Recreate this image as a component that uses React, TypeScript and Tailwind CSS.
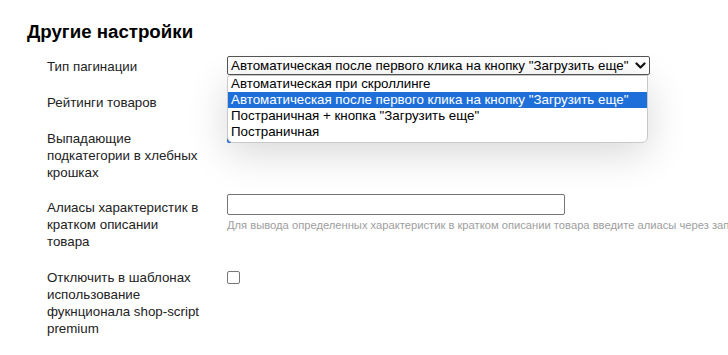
import React from "react";

const font = { fontFamily: '"Liberation Sans", Arial, sans-serif' };

function Chevron() {
  return (
    <svg width="11" height="8" viewBox="0 0 11 8" className="shrink-0">
      <path d="M1.5 1.5 L5.5 5.5 L9.5 1.5" fill="none" stroke="#111" strokeWidth="2.2" strokeLinecap="round" strokeLinejoin="round" />
    </svg>
  );
}

const options = [
  "Автоматическая при скроллинге",
  'Автоматическая после первого клика на кнопку "Загрузить еще"',
  'Постраничная + кнопка "Загрузить еще"',
  "Постраничная",
];

export default function App() {
  return (
    <div className="w-[728px] h-[355px] overflow-hidden bg-white text-[#222] relative" style={font}>
      <h2 className="ml-[27px] mt-[20px] text-[18.7px] leading-[24px] font-bold text-black">Другие настройки</h2>
      <div className="ml-[47px] mt-[14px] flex flex-col text-[13.33px] leading-[17px]">
        {/* Row 1 */}
        <div className="flex">
          <div className="w-[180px] shrink-0">Тип пагинации</div>
          <div className="relative mt-[-2px]">
            <div className="w-[423px] h-[19px] border border-[#555] rounded-[2px] flex items-center justify-between pl-[3px] pr-[3px] bg-white">
              <span className="whitespace-nowrap text-black">Автоматическая после первого клика на кнопку "Загрузить еще"</span>
              <Chevron />
            </div>
            <div className="absolute left-0 top-[81px] w-[4px] h-[6px] bg-[#1e6fd9] rounded-bl-[2px]" />
            <div className="absolute left-0 top-[19px] z-10 w-[421px] h-[68px] bg-white border border-[#c8c8c8] rounded-b-[6px] rounded-tl-[3px] shadow-[0_10px_40px_rgba(0,0,0,0.16)] overflow-hidden">
              {options.map((o, i) => (
                <div
                  key={o}
                  className={
                    i === 1
                      ? "h-[16px] leading-[16px] pl-[3px] bg-[#1e6fd9] text-white whitespace-nowrap"
                      : "h-[16px] leading-[16px] pl-[3px] text-black whitespace-nowrap"
                  }
                >
                  {o}
                </div>
              ))}
            </div>
          </div>
        </div>
        {/* Row 2 */}
        <div className="flex mt-[19px]">
          <div className="w-[180px] shrink-0">Рейтинги товаров</div>
        </div>
        {/* Row 3 */}
        <div className="flex mt-[19px]">
          <div className="w-[154px] shrink-0">Выпадающие подкатегории в хлебных крошках</div>
        </div>
        {/* Row 4 */}
        <div className="flex mt-[18px]">
          <div className="w-[154px] shrink-0">Алиасы характеристик в кратком описании товара</div>
          <div className="ml-[26px] mt-[-5px] flex flex-col">
            <div className="w-[338px] h-[21px] border border-[#767676] rounded-[2px] bg-white" />
            <div className="mt-[4px] text-[11.2px] leading-[13px] text-[#9e9e9e] whitespace-nowrap">
              Для вывода определенных характеристик в кратком описании товара введите алиасы через запятую
            </div>
          </div>
        </div>
        {/* Row 5 */}
        <div className="flex mt-[19px]">
          <div className="w-[154px] shrink-0">Отключить в шаблонах использование фукнционала shop-script premium</div>
          <div className="ml-[26px] mt-[2px]">
            <div className="w-[13px] h-[13px] border border-[#767676] rounded-[2px] bg-white" />
          </div>
        </div>
      </div>
    </div>
  );
}
